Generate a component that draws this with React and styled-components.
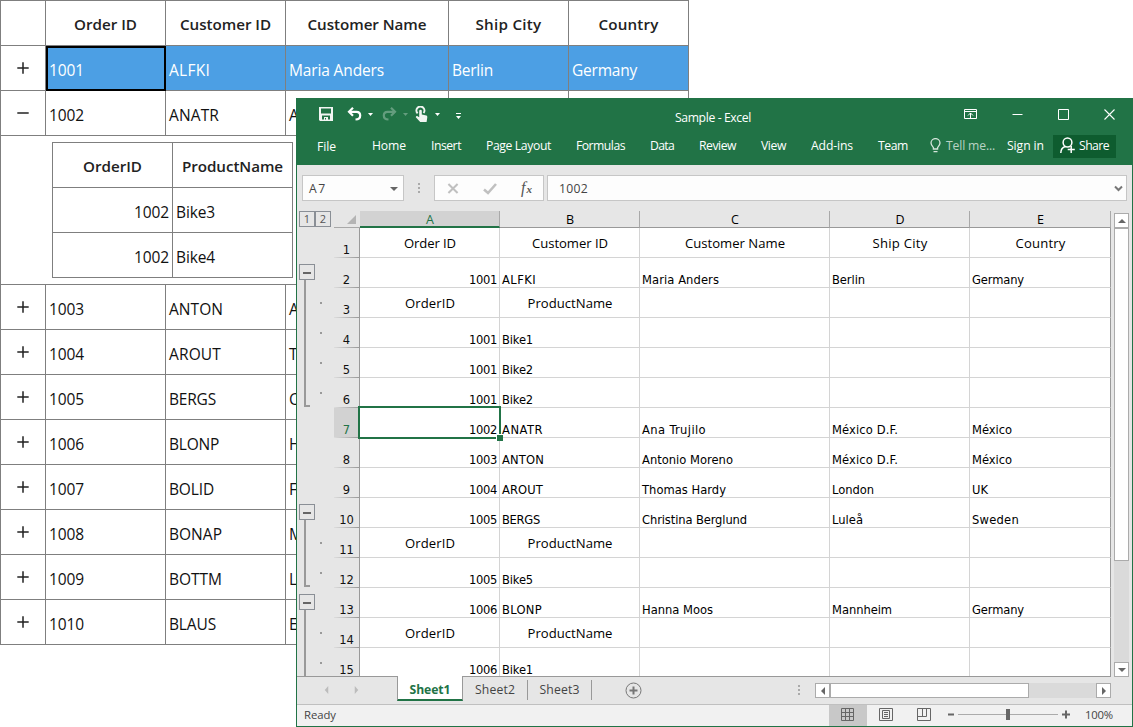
import React, { useLayoutEffect, useRef, useState } from 'react';
import styled, { createGlobalStyle, css } from 'styled-components';

const GREEN = '#217346';
const LINE = '#7f7f7f';
const UI = '"Open Sans", "Noto Sans", sans-serif';
const CELL = '"DejaVu Sans Condensed", "DejaVu Sans", sans-serif';

const Global = createGlobalStyle`
  *, *::before, *::after { box-sizing: border-box; }
  html, body { margin: 0; padding: 0; background: #fff; }
  body { width: 1133px; height: 727px; overflow: hidden; font-family: ${UI}; }
  svg { display: block; flex: none; }
`;

/* ---------- text whose tracking is adjusted to a given width ---------- */

const Run = styled.span`
  display: inline-block;
  flex: none;
  white-space: pre;
  text-align: left;
`;

function Fit({ w, children }) {
  const ref = useRef(null);
  const [track, setTrack] = useState(null);
  useLayoutEffect(() => {
    if (!w) return;
    const natural = ref.current.getBoundingClientRect().width;
    setTrack((w - natural) / String(children).length);
  }, [w, children]);
  return (
    <Run ref={ref} style={track === null ? undefined : { letterSpacing: `${track}px`, width: w }}>
      {children}
    </Run>
  );
}

/* ---------- order grid ---------- */

const Page = styled.main`
  position: relative;
  width: 1133px;
  height: 727px;
  overflow: hidden;
  background: #fff;
`;

const OrderGrid = styled.section`
  width: 689px;
  border-left: 1px solid ${LINE};
  border-top: 1px solid ${LINE};
  font-size: 15.5px;
  color: #111;
`;

const OrderRow = styled.div`
  display: grid;
  grid-template-columns: 45px 120px 120px 163px 120px 120px;
  height: 45px;
`;

const OrderCell = styled.div`
  position: relative;
  display: flex;
  align-items: center;
  justify-content: ${(p) => (p.$head || p.$icon ? 'center' : p.$right ? 'flex-end' : 'flex-start')};
  padding: ${(p) => (p.$head ? '1px 0 0' : p.$icon ? 0 : '3px 3px 0')};
  border-right: 1px solid ${LINE};
  border-bottom: 1px solid ${LINE};
  line-height: 20px;
  font-weight: ${(p) => (p.$head ? 600 : 400)};
  ${(p) => p.$head && css`color: #222; font-size: 15.2px;`}
  ${(p) => p.$selected && css`background: #4c9fe4; color: #fff;`}
`;

const FocusFrame = styled.i`
  position: absolute;
  inset: 0 -1px -1px 0;
  border: 2px solid #000;
  z-index: 1;
`;

const DetailRow = styled.div`
  height: 149px;
  padding: 6px 0 0 51px;
  border-right: 1px solid ${LINE};
  border-bottom: 1px solid ${LINE};
`;

const DetailGrid = styled.div`
  width: 241px;
  border-left: 1px solid ${LINE};
  border-top: 1px solid ${LINE};
`;

const DetailLine = styled.div`
  display: grid;
  grid-template-columns: 120px 120px;
  height: 45px;
`;

const Toggle = ({ open }) => (
  <svg width="12" height="12" viewBox="0 0 12 12" stroke="#222" strokeWidth="1.5">
    <path d={open ? 'M.3 6H11.700' : 'M.3 6H11.700M6 .3V11.700'} />
  </svg>
);

const orderHeads = [['Order ID', 63], ['Customer ID', 91], ['Customer Name', 119], ['Ship City', 66], ['Country', 60]];
const orders = [
  ['1001', ['ALFKI', 41], ['Maria Anders', 95], ['Berlin', 41], ['Germany', 65]],
  ['1002', ['ANATR', 50], ['A'], [], []],
  ['1003', ['ANTON', 54], ['A'], [], []],
  ['1004', ['AROUT', 52], ['T'], [], []],
  ['1005', ['BERGS', 47], ['C'], [], []],
  ['1006', ['BLONP', 50], ['H'], [], []],
  ['1007', ['BOLID', 45], ['F'], [], []],
  ['1008', ['BONAP', 53], ['M'], [], []],
  ['1009', ['BOTTM', 53], ['L'], [], []],
  ['1010', ['BLAUS', 47], ['E'], [], []],
];

function Orders() {
  return (
    <OrderGrid>
      <OrderRow>
        <OrderCell $head />
        {orderHeads.map(([t, w]) => (
          <OrderCell key={t} $head><Fit w={w}>{t}</Fit></OrderCell>
        ))}
      </OrderRow>
      {orders.map(([id, ...rest], i) => (
        <React.Fragment key={id}>
          <OrderRow>
            <OrderCell $icon><Toggle open={i === 1} /></OrderCell>
            <OrderCell $selected={i === 0}>
              <Fit w={35}>{id}</Fit>
              {i === 0 && <FocusFrame />}
            </OrderCell>
            {rest.map(([t, w], c) => (
              <OrderCell key={c} $selected={i === 0}>{t && <Fit w={w}>{t}</Fit>}</OrderCell>
            ))}
          </OrderRow>
          {i === 1 && (
            <DetailRow>
              <DetailGrid>
                <DetailLine>
                  <OrderCell $head><Fit w={59}>OrderID</Fit></OrderCell>
                  <OrderCell $head><Fit w={101}>ProductName</Fit></OrderCell>
                </DetailLine>
                {['Bike3', 'Bike4'].map((b) => (
                  <DetailLine key={b}>
                    <OrderCell $right><Fit w={35}>1002</Fit></OrderCell>
                    <OrderCell><Fit w={39}>{b}</Fit></OrderCell>
                  </DetailLine>
                ))}
              </DetailGrid>
            </DetailRow>
          )}
        </React.Fragment>
      ))}
    </OrderGrid>
  );
}

/* ---------- spreadsheet window ---------- */

const Window = styled.section`
  position: absolute;
  left: 296px;
  top: 98px;
  z-index: 2;
  display: flex;
  flex-direction: column;
  width: 837px;
  height: 629px;
  border: 1px solid ${GREEN};
  border-top: 0;
  background: #e6e6e6;
  font-size: 12.2px;
  color: #222;
`;

const TitleBar = styled.header`
  display: flex;
  align-items: center;
  height: 32px;
  background: ${GREEN};
  color: #fff;
`;

const QuickTools = styled.div`
  display: flex;
  align-items: center;
  width: 378px;
  padding-left: 22px;
`;

const Tool = styled.span`
  display: flex;
  margin-left: ${(p) => p.$ml || 0}px;
  opacity: ${(p) => (p.$off ? 0.3 : 1)};
  padding-top: ${(p) => p.$pt || 0}px;
`;

const Title = styled.div`
  padding-top: 8px;
  line-height: 20px;
  flex: 1;
`;

const WindowButtons = styled.div`
  display: flex;
  align-items: center;
  gap: 35px;
  padding-right: 17px;
`;

const Ribbon = styled.nav`
  display: flex;
  align-items: center;
  height: 35px;
  padding: 0 16px 3px 20px;
  background: ${GREEN};
  color: #fff;
  line-height: 16px;
`;

const FileTab = styled.div`
  width: 55px;
  padding-top: 1px;
`;

const Tabs = styled.div`
  display: flex;
  gap: 25px;
  flex: 1;
  padding-bottom: 1px;
`;

const TellMe = styled.div`
  display: flex;
  align-items: center;
  gap: 5px;
  width: 77px;
  padding-bottom: 1px;
  color: #b9d3c4;
`;

const SignIn = styled.div`
  padding-bottom: 1px;
`;

const ShareButton = styled.div`
  display: flex;
  align-items: center;
  gap: 4px;
  width: 63px;
  height: 23px;
  margin-left: 9px;
  padding: 0 0 1px 7px;
  background: #0e5c2f;
`;

const FormulaBar = styled.div`
  display: flex;
  align-items: flex-start;
  height: 46px;
  padding: 10px 5px 0;
`;

const Field = styled.div`
  display: flex;
  align-items: center;
  justify-content: space-between;
  width: ${(p) => p.$w}px;
  height: 26px;
  margin-left: ${(p) => p.$ml || 0}px;
  padding: 1px ${(p) => p.$pr || 0}px 0 ${(p) => p.$pl || 0}px;
  border: 1px solid #c6c6c6;
  background: #fdfdfd;
  color: #444;
  line-height: 20px;
`;

const FxMark = styled.span`
  display: flex;
  align-items: baseline;
  font-family: "Liberation Serif", serif;
  font-style: italic;
  font-size: 16px;
  line-height: 16px;
  color: #555;
  small { font-size: 11px; font-weight: 700; margin-left: 1px; }
`;

const Grip = styled.span`
  display: flex;
  flex-direction: column;
  gap: 2px;
  width: 2px;
  margin: ${(p) => p.$m};
  &::before, &::after, i { content: ''; width: 2px; height: 2px; background: #aaa; display: block; }
`;

const Body = styled.div`
  display: flex;
  height: 466px;
`;

const Sheet = styled.div`
  width: 814px;
  height: 466px;
  overflow: hidden;
  border-bottom: 1px solid #999;
`;

const SheetRow = styled.div`
  display: grid;
  grid-template-columns: 37px 26px 140px 140px 190px 140px 141px;
  grid-template-rows: ${(p) => p.$h}px;
  height: ${(p) => p.$h}px;
`;

const Levels = styled.div`
  display: flex;
  padding-left: 2px;
  height: 16px;
`;

const Level = styled.span`
  display: flex;
  align-items: center;
  justify-content: center;
  width: 16px;
  height: 16px;
  border: 1px solid #8a8f96;
  font-size: 11px;
  line-height: 14px;
  color: #555;
`;

const Corner = styled.div`
  display: flex;
  justify-content: flex-end;
  padding: 4px 4px 0 0;
  border-bottom: 1px solid #a8a8a8;
`;

const ColumnHead = styled.div`
  display: flex;
  justify-content: center;
  padding: 2px 0 0 1px;
  font-size: 12.5px;
  line-height: 13px;
  color: ${(p) => (p.$active ? GREEN : '#000')};
  background: ${(p) => (p.$active ? '#d2d2d2' : 'transparent')};
  border-bottom: ${(p) => (p.$active ? `2px solid ${GREEN}` : '1px solid #999')};
  border-right: 1px solid #a9a9a9;
`;

const RowHead = styled.div`
  display: flex;
  align-items: flex-end;
  justify-content: center;
  padding-bottom: 1px;
  font-family: ${CELL};
  font-size: 12.8px;
  line-height: 14px;
  color: ${(p) => (p.$active ? GREEN : '#111')};
  border-right: 1px solid #999;
  background:
    linear-gradient(90deg, #dcdcdc, #999) bottom / 100% 1px no-repeat
    ${(p) => (p.$active ? ', #d2d2d2' : '')};
`;

const SheetCell = styled.div`
  position: relative;
  display: flex;
  align-items: ${(p) => (p.$head ? 'center' : 'flex-end')};
  justify-content: ${(p) => (p.$head ? 'center' : p.$right ? 'flex-end' : 'flex-start')};
  padding: ${(p) => (p.$head ? '0 0 0 1px' : '0 2px 0')};
  background: #fff;
  border-right: 1px solid ${(p) => (p.$last ? '#999' : '#d4d4d4')};
  border-bottom: 1px solid #d4d4d4;
  font-family: ${(p) => (p.$head ? UI : CELL)};
  font-size: ${(p) => (p.$head ? 13.1 : 12.8)}px;
  line-height: 14px;
  color: #000;
  white-space: nowrap;
`;

const Selection = styled.i`
  position: absolute;
  left: -2px;
  top: -2px;
  width: 143px;
  height: 33px;
  border: 2px solid ${GREEN};
  z-index: 1;
  &::after {
    content: '';
    position: absolute;
    right: -4px;
    bottom: -4px;
    width: 7px;
    height: 7px;
    border: 1px solid #fff;
    background: ${GREEN};
    background-clip: padding-box;
    border-right: 0;
    border-bottom: 0;
  }
`;

const Outline = styled.div`
  display: flex;
  padding-left: 2px;
`;

const OutlineTrack = styled.div`
  display: flex;
  flex-direction: column;
  width: 21px;
  padding-top: ${(p) => (p.$start ? 6 : 0)}px;
`;

const Collapse = styled.span`
  display: flex;
  align-items: center;
  justify-content: center;
  width: 16px;
  height: 16px;
  flex: none;
  border: 1px solid #8a8f96;
  &::before { content: ''; width: 8px; height: 2px; background: #666; margin-top: 2px; }
`;

const Bracket = styled.span`
  flex: 1;
  width: ${(p) => (p.$end ? 6 : 2)}px;
  margin: 0 0 ${(p) => (p.$end ? 1 : 0)}px 5px;
  border-left: 2px solid #999;
  border-bottom: ${(p) => (p.$end ? '2px solid #999' : 0)};
`;

const Dot = styled.span`
  width: 2px;
  height: 2px;
  margin-top: 14px;
  background: #999;
`;

const VScroll = styled.div`
  display: flex;
  flex-direction: column;
  width: 15px;
  margin: 2px 0 0 3px;
  height: 464px;
  background: #dadada;
`;

const ScrollButton = styled.span`
  display: flex;
  align-items: center;
  justify-content: center;
  flex: none;
  width: 15px;
  height: 15px;
  border: 1px solid #ababab;
  background: #fff;
`;

const Thumb = styled.span`
  flex: none;
  width: ${(p) => p.$w}px;
  height: ${(p) => p.$h}px;
  border: 1px solid #ababab;
  background: #fff;
`;

const Spacer = styled.span`
  flex: 1;
`;

const TabBar = styled.div`
  display: flex;
  height: 28px;
  border-bottom: 1px solid #c0c0c0;
  color: #444;
`;

const TabArrows = styled.div`
  display: flex;
  align-items: center;
  gap: 23px;
  width: 100px;
  padding: 0 0 1px 26px;
`;

const ActiveTab = styled.div`
  display: flex;
  align-items: center;
  justify-content: center;
  width: 66px;
  height: 25px;
  margin-top: -1px;
  padding-top: 3px;
  border: 1px solid #999;
  border-top: 0;
  border-bottom: 2px solid ${GREEN};
  background: #fff;
  color: ${GREEN};
  font-weight: 700;
  z-index: 1;
`;

const SheetTab = styled.div`
  display: flex;
  align-items: center;
  justify-content: center;
  width: ${(p) => p.$w}px;
  height: 20px;
  margin-top: 3px;
  padding-bottom: 1px;
  border-right: 1px solid #999;
`;

const AddSheet = styled.div`
  padding: 5px 0 0 33px;
  width: 206px;
`;

const HScroll = styled.div`
  display: flex;
  width: 296px;
  height: 15px;
  margin: 6px 0 0 15px;
  background: #dadada;
`;

const StatusBar = styled.footer`
  display: flex;
  height: 21px;
  background: #f1f1f1;
  color: #444;
  font-size: 11.3px;
  line-height: 20px;
`;

const Ready = styled.div`
  width: 532px;
  padding-left: 7px;
`;

const ViewButton = styled.div`
  display: flex;
  align-items: flex-start;
  justify-content: center;
  width: 38px;
  padding: 3px ${(p) => (p.$active ? 1 : 0)}px 0 0;
  background: ${(p) => (p.$active ? '#c8c8c8' : 'transparent')};
`;

const ZoomSlider = styled.div`
  padding: 4px 0 0 5px;
  width: 142px;
`;

const Caret = ({ c = '#fff', w = 5, h = 3 }) => (
  <svg width={w} height={h} viewBox="0 0 6 3" preserveAspectRatio="none"><path d="M0 0H6L3 3Z" fill={c} /></svg>
);

const Arrow = ({ d, c = '#666', w = 8, h = 8 }) => (
  <svg width={w} height={h} viewBox="0 0 8 8" preserveAspectRatio="none"><path d={d} fill={c} /></svg>
);
const UP = 'M0 6L4 2L8 6Z';
const DOWN = 'M0 2L4 6L8 2Z';
const LEFT = 'M6 0L2 4L6 8Z';
const RIGHT = 'M2 0L6 4L2 8Z';

const SaveIcon = () => (
  <svg width="14" height="14" viewBox="0 0 14 14">
    <path fillRule="evenodd" fill="#f1f5f2" d="M0 0H14V14H1L0 13ZM2 1.5V6.5H12V1.5ZM3 8.5V12.5H5V10H9V12.5H11V8.5ZM6 11V12.5H7V11Z" />
  </svg>
);

const UndoIcon = ({ flip }) => (
  <svg width="15" height="14" viewBox="0 0 15 14" fill="none" stroke="#fff" strokeWidth="2.2">
    <g transform={flip ? 'translate(15 0) scale(-1 1)' : undefined}>
      <path d="M2 4.8H9.5C12.2 4.8 13.2 6.5 13.2 8.4C13.2 10.4 11.5 12.3 8.5 12.5" />
      <path d="M6 .8L2 4.8L6 8.8" />
    </g>
  </svg>
);

const TouchIcon = () => (
  <svg width="13" height="17" viewBox="0 0 13 17">
    <path d="M2.6 7.4A4 4 0 1 1 8.6 7" fill="none" stroke="#f1f5f2" strokeWidth="2" />
    <path d="M4.2 4.4Q5.5 3 6.8 4.4V8.4L11.4 9.6Q12.4 10 12.3 11.2L11.6 16H5.2L.8 11.2Q.8 9.9 2.2 10L4.2 11.3Z" fill="#f1f5f2" />
  </svg>
);

const BulbIcon = () => (
  <svg width="11" height="15" viewBox="0 0 11 15" fill="none" stroke="#d6e5dc" strokeWidth="1.3">
    <path d="M3.4 11V9.6C2 8 1 6.8 1 5A4.4 4.3 0 0 1 10 5C10 6.8 9 8 7.6 9.6V11ZM3.5 13.6H7.5" />
  </svg>
);

const ShareIcon = () => (
  <svg width="15" height="17" viewBox="0 0 15 17" fill="none" stroke="#fff" strokeWidth="1.5">
    <circle cx="7.5" cy="5.5" r="4.4" />
    <path d="M.8 16C.8 12.2 2.8 10.2 5.4 9.5M11.2 9V16M7.7 12.5H14.8" />
  </svg>
);

const ribbonTabs = [['Home', 34], ['Insert', 30], ['Page Layout', 65], ['Formulas', 49], ['Data', 24], ['Review', 37], ['View', 25], ['Add-ins', 42], ['Team', 30]];

const H = (t, w) => ({ t, w, head: true });
const num = (t) => ({ t, w: 28, right: true });
const C = (t, w) => ({ t, w });
const childHead = [H('OrderID', 50), H('ProductName', 85)];

const sheetRows = [
  { cells: [H('Order ID', 52), H('Customer ID', 76), H('Customer Name', 100), H('Ship City', 55), H('Country', 50)] },
  { outline: 'start', cells: [num('1001'), C('ALFKI', 34), C('Maria Anders', 77), C('Berlin', 33), C('Germany', 52)] },
  { outline: 'mid', cells: childHead },
  { outline: 'mid', cells: [num('1001'), C('Bike1', 31)] },
  { outline: 'mid', cells: [num('1001'), C('Bike2', 31)] },
  { outline: 'end', cells: [num('1001'), C('Bike2', 31)] },
  { active: true, cells: [num('1002'), C('ANATR', 41), C('Ana Trujilo', 64), C('México D.F.', 66), C('México', 40)] },
  { cells: [num('1003'), C('ANTON', 42), C('Antonio Moreno', 91), C('México D.F.', 66), C('México', 40)] },
  { cells: [num('1004'), C('AROUT', 41), C('Thomas Hardy', 84), C('London', 42), C('UK', 16)] },
  { outline: 'start', cells: [num('1005'), C('BERGS', 38), C('Christina Berglund', 105), C('Luleå', 31), C('Sweden', 47)] },
  { outline: 'mid', cells: childHead },
  { outline: 'end', cells: [num('1005'), C('Bike5', 31)] },
  { outline: 'start', cells: [num('1006'), C('BLONP', 40), C('Hanna Moos', 71), C('Mannheim', 60), C('Germany', 52)] },
  { outline: 'mid', cells: childHead },
  { outline: 'mid', cells: [num('1006'), C('Bike1', 31)] },
];

function Row({ row, n }) {
  const o = row.outline;
  return (
    <SheetRow $h={30}>
      <Outline>
        {o && (
          <OutlineTrack $start={o === 'start'}>
            {o === 'start' && <Collapse />}
            <Bracket $end={o === 'end'} />
          </OutlineTrack>
        )}
        {o && o !== 'start' && <Dot />}
      </Outline>
      <RowHead $active={row.active}>{n}</RowHead>
      {[0, 1, 2, 3, 4].map((i) => {
        const c = row.cells[i];
        return (
          <SheetCell key={i} $head={c?.head} $right={c?.right} $last={i === 4}>
            {c && <Fit w={c.w}>{c.t}</Fit>}
            {row.active && i === 0 && <Selection />}
          </SheetCell>
        );
      })}
    </SheetRow>
  );
}

function Excel() {
  return (
    <Window>
      <TitleBar>
        <QuickTools>
          <Tool><SaveIcon /></Tool>
          <Tool $ml={14}><UndoIcon /></Tool>
          <Tool $ml={6}><Caret /></Tool>
          <Tool $ml={9} $off><UndoIcon flip /></Tool>
          <Tool $ml={6} $off><Caret /></Tool>
          <Tool $ml={7}><TouchIcon /></Tool>
          <Tool $ml={7}><Caret /></Tool>
          <Tool $ml={16} $pt={3}>
            <svg width="5" height="6" viewBox="0 0 5 6"><path d="M0 0H5V1H0ZM0 3H5L2.5 6Z" fill="#fff" /></svg>
          </Tool>
        </QuickTools>
        <Title><Fit w={76}>Sample - Excel</Fit></Title>
        <WindowButtons>
          <svg width="13" height="10" viewBox="0 0 13 10" fill="none" stroke="#fff"><path d="M.5 .5H12.5V9.5H.5ZM.5 2.5H12.5M6.5 9V4M4 6.5L6.5 4L9 6.5" /></svg>
          <svg width="11" height="11" viewBox="0 0 11 11" stroke="#fff"><path d="M.5 5.5H10.5" /></svg>
          <svg width="11" height="11" viewBox="0 0 11 11" fill="none" stroke="#fff"><path d="M.5 .5H10.5V10.5H.5Z" /></svg>
          <svg width="11" height="11" viewBox="0 0 11 11" stroke="#fff" strokeWidth="1.1"><path d="M.5 .5L10.5 10.5M10.5 .5L.5 10.5" /></svg>
        </WindowButtons>
      </TitleBar>
      <Ribbon>
        <FileTab><Fit w={19}>File</Fit></FileTab>
        <Tabs>{ribbonTabs.map(([t, w]) => <Fit key={t} w={w}>{t}</Fit>)}</Tabs>
        <TellMe><BulbIcon /><Fit w={49}>Tell me...</Fit></TellMe>
        <SignIn><Fit w={37}>Sign in</Fit></SignIn>
        <ShareButton><ShareIcon /><Fit w={30}>Share</Fit></ShareButton>
      </Ribbon>
      <FormulaBar>
        <Field $w={102} $pl={6} $pr={5}><Fit w={18}>A7</Fit><Caret c="#666" w={8} h={4} /></Field>
        <Grip $m="8px 14px 0 14px"><i /></Grip>
        <Field $w={110} $pl={12} $pr={11}>
          <svg width="12" height="11" viewBox="0 0 12 12" stroke="#c0c0c0" strokeWidth="2.2"><path d="M1 1L11 11M11 1L1 11" /></svg>
          <svg width="14" height="12" viewBox="0 0 14 12" fill="none" stroke="#c0c0c0" strokeWidth="2.6"><path d="M1 6.5L5 10L13 1" /></svg>
          <FxMark><em>f</em><small>x</small></FxMark>
        </Field>
        <Field $w={580} $ml={3} $pl={11} $pr={3}>
          <Fit w={29}>1002</Fit>
          <svg width="9" height="7" viewBox="0 0 9 7" fill="none" stroke="#777" strokeWidth="2"><path d="M1 1.5L4.5 5L8 1.5" /></svg>
        </Field>
      </FormulaBar>
      <Body>
        <Sheet>
          <SheetRow $h={17}>
            <Levels><Level>1</Level><Level>2</Level></Levels>
            <Corner><svg width="9" height="9" viewBox="0 0 9 9"><path d="M9 0V9H0Z" fill="#b4b4b4" /></svg></Corner>
            {['A', 'B', 'C', 'D', 'E'].map((c, i) => <ColumnHead key={c} $active={i === 0}>{c}</ColumnHead>)}
          </SheetRow>
          {sheetRows.map((r, i) => <Row key={i} row={r} n={i + 1} />)}
        </Sheet>
        <VScroll>
          <ScrollButton><Arrow d={UP} /></ScrollButton>
          <Thumb $w={15} $h={333} />
          <Spacer />
          <ScrollButton><Arrow d={DOWN} /></ScrollButton>
        </VScroll>
      </Body>
      <TabBar>
        <TabArrows><Arrow d={LEFT} c="#bcbcbc" w={7} h={8} /><Arrow d={RIGHT} c="#bcbcbc" w={7} h={8} /></TabArrows>
        <ActiveTab><Fit w={41}>Sheet1</Fit></ActiveTab>
        <SheetTab $w={65}><Fit w={40}>Sheet2</Fit></SheetTab>
        <SheetTab $w={64}><Fit w={40}>Sheet3</Fit></SheetTab>
        <AddSheet>
          <svg width="17" height="17" viewBox="0 0 17 17" fill="none" stroke="#777"><circle cx="8.5" cy="8.5" r="7.5" /><path d="M4.5 8.5H12.5M8.5 4.5V12.5" strokeWidth="2" /></svg>
        </AddSheet>
        <Grip $m="8px 0 0 0"><i /></Grip>
        <HScroll>
          <ScrollButton><Arrow d={LEFT} /></ScrollButton>
          <Thumb $w={199} $h={15} />
          <Spacer />
          <ScrollButton><Arrow d={RIGHT} /></ScrollButton>
        </HScroll>
      </TabBar>
      <StatusBar>
        <Ready><Fit w={32}>Ready</Fit></Ready>
        <ViewButton $active>
          <svg width="13" height="13" viewBox="0 0 13 13" fill="none" stroke="#666"><path d="M.5 .5H12.5V12.5H.5ZM4.5 0V13M8.5 0V13M0 4.5H13M0 8.5H13" /></svg>
        </ViewButton>
        <ViewButton>
          <svg width="14" height="13" viewBox="0 0 14 13" fill="none" stroke="#666"><path d="M.5 .5H13.5V12.5H.5ZM3.5 2.5H10.5V10.5H3.5ZM5 4.5H9M5 6.5H9M5 8.5H9" /></svg>
        </ViewButton>
        <ViewButton>
          <svg width="14" height="13" viewBox="0 0 14 13" fill="none" stroke="#666"><path d="M.5 .5H13.5V12.5H.5ZM1 8.5H9.5V.5M5.5 .5V8" /></svg>
        </ViewButton>
        <ZoomSlider>
          <svg width="123" height="11" viewBox="0 0 123 11">
            <path d="M0 4.500H6V6.500H0ZM114 4.500H122V6.500H114ZM117 1.500H119V9.500H117Z" fill="#666" />
            <path d="M10 5H110V6H10Z" fill="#ababab" />
            <path d="M58 0H62V11H58Z" fill="#666" />
          </svg>
        </ZoomSlider>
        <Fit w={28}>100%</Fit>
      </StatusBar>
    </Window>
  );
}

export default function App() {
  return (
    <Page>
      <Global />
      <Orders />
      <Excel />
    </Page>
  );
}
